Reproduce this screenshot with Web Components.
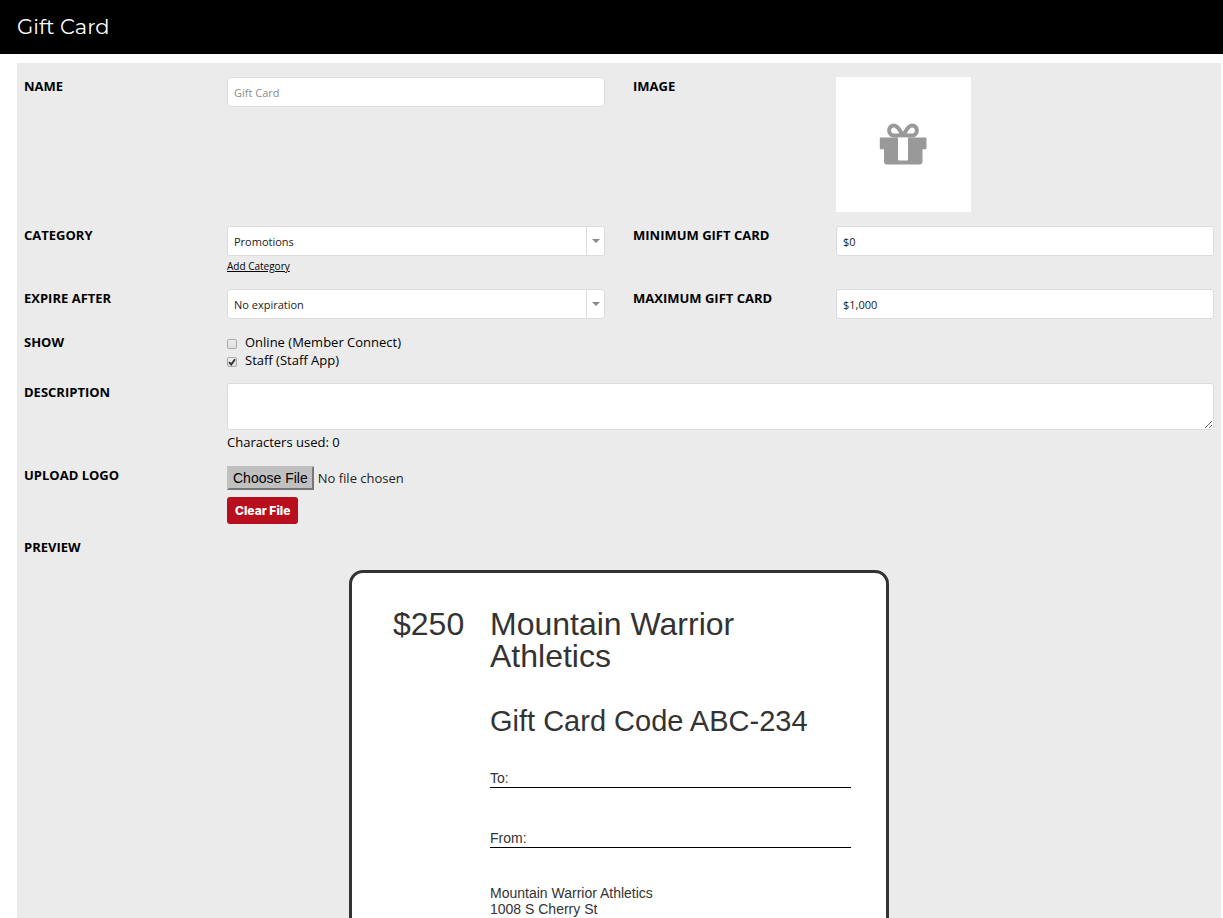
<!DOCTYPE html>
<html lang="en">
<head>
<meta charset="utf-8">
<meta name="viewport" content="width=device-width, initial-scale=1">
<title>Gift Card</title>
<style>
    body {
        margin: 0;
        background: #fff;
        color: #000;
        font-family: "Open Sans", sans-serif;
        font-size: 13px;
        line-height: 18px;
    }
</style>
</head>
<body>

<page-header>Gift Card</page-header>

<main>
    <form-panel>
        <form-row>
            <text-field label="Name" placeholder="Gift Card"></text-field>
            <image-field label="Image"></image-field>
        </form-row>
        <form-row>
            <select-field label="Category" options="Promotions" link="Add Category"></select-field>
            <text-field label="Minimum Gift Card" value="$0"></text-field>
        </form-row>
        <form-row>
            <select-field label="Expire After" options="No expiration"></select-field>
            <text-field label="Maximum Gift Card" value="$1,000"></text-field>
        </form-row>
        <show-field label="Show"></show-field>
        <description-field label="Description"></description-field>
        <logo-field label="Upload Logo"></logo-field>
        <preview-heading label="Preview"></preview-heading>
        <gift-card amount="$250" code="ABC-234">
            <span slot="business">Mountain Warrior Athletics</span>
            <span slot="address">Mountain Warrior Athletics<br>1008 S Cherry St</span>
        </gift-card>
    </form-panel>
</main>

<script>
// shared by every field: label on the left, control on the right
const fieldStyles = `
    :host {
        display: grid;
        grid-template-columns: 203px minmax(0, 1fr);
        align-items: start;
    }
    * {
        box-sizing: border-box;
    }
    .field-label {
        font-weight: bold;
        text-transform: uppercase;
    }
    .control {
        display: block;
        width: 100%;
        height: 30px;
        margin: 0;
        padding: 0 6px;
        border: 1px solid #dcdcdc;
        border-radius: 3px;
        background: #fff;
        color: #222;
        font-family: inherit;
        font-size: 11px;
    }
`;

class PageHeader extends HTMLElement {

    constructor() {
        super();
        this.shadow = this.attachShadow({mode: 'open'});
        this.render();
    }

    render() {
        this.shadow.innerHTML =
        `
        <style>
            :host {
                display: block;
                background: #000;
                color: #fff;
            }
            h1 {
                margin: 0;
                padding: 0 17px;
                font-family: Montserrat, Inter, sans-serif;
                font-size: 21px;
                font-weight: 400;
                line-height: 54px;
            }
        </style>
        <header><h1><slot></slot></h1></header>
        `;
    }
}

class FormPanel extends HTMLElement {

    constructor() {
        super();
        this.shadow = this.attachShadow({mode: 'open'});
        this.render();
    }

    render() {
        this.shadow.innerHTML =
        `
        <style>
            :host {
                display: block;
                margin: 9px 2px 0 17px;
                background: #ebebeb;
            }
            form {
                display: flex;
                flex-direction: column;
                gap: 14px;
                padding: 14px 7px;
            }
        </style>
        <form><slot></slot></form>
        `;
    }
}

class FormRow extends HTMLElement {

    constructor() {
        super();
        this.shadow = this.attachShadow({mode: 'open'});
        this.render();
    }

    render() {
        this.shadow.innerHTML =
        `
        <style>
            :host {
                display: grid;
                grid-template-columns: repeat(2, minmax(0, 1fr));
                column-gap: 28px;
                align-items: start;
            }
        </style>
        <slot></slot>
        `;
    }
}

class TextField extends HTMLElement {

    constructor() {
        super();
        this.shadow = this.attachShadow({mode: 'open'});
        this.render();
    }

    render() {
        const value = this.getAttribute('value') || '';
        const placeholder = this.getAttribute('placeholder') || '';
        this.shadow.innerHTML =
        `
        <style>
            ${fieldStyles}
            .control::placeholder {
                color: #8c8c8c;
                opacity: 1;
            }
        </style>
        <label class="field-label" for="field">${this.getAttribute('label')}</label>
        <input class="control" id="field" type="text" value="${value}" placeholder="${placeholder}">
        `;
    }
}

class SelectField extends HTMLElement {

    constructor() {
        super();
        this.shadow = this.attachShadow({mode: 'open'});
        this.render();
    }

    render() {
        const options = this.getAttribute('options').split('|');
        const link = this.getAttribute('link');
        this.shadow.innerHTML =
        `
        <style>
            ${fieldStyles}
            .select-box {
                position: relative;
            }
            .control {
                appearance: none;
                padding-right: 24px;
            }
            .arrow {
                position: absolute;
                top: 1px;
                right: 1px;
                bottom: 1px;
                width: 18px;
                display: flex;
                align-items: center;
                justify-content: center;
                border-left: 1px solid #dcdcdc;
                pointer-events: none;
            }
            a {
                display: inline-block;
                margin-top: 2px;
                color: #000;
                font-size: 10px;
                line-height: 17px;
                vertical-align: top;
            }
        </style>
        <label class="field-label" for="field">${this.getAttribute('label')}</label>
        <div>
            <div class="select-box">
                <select class="control" id="field">
                    ${options.map(option => `<option>${option}</option>`).join('')}
                </select>
                <span class="arrow">
                    <svg width="8" height="4" viewBox="0 0 8 4" aria-hidden="true"><path d="M0 0h8L4 4z" fill="#888"/></svg>
                </span>
            </div>
            ${link ? `<a href="#">${link}</a>` : ''}
        </div>
        `;
    }
}

class ImageField extends HTMLElement {

    constructor() {
        super();
        this.shadow = this.attachShadow({mode: 'open'});
        this.render();
    }

    render() {
        this.shadow.innerHTML =
        `
        <style>
            ${fieldStyles}
            .image {
                display: flex;
                align-items: center;
                justify-content: center;
                width: 135px;
                height: 135px;
                padding: 0 2px 2px 0;
                background: #fff;
            }
        </style>
        <span class="field-label">${this.getAttribute('label')}</span>
        <div class="image">
            <svg width="48" height="42" viewBox="0 0 48 42" aria-hidden="true">
                <path fill="#999" d="M1.500 14.500H46.500Q47.500 14.500 47.500 15.500V25.500Q47.500 26.200 46.500 26.200H43.500V38.500Q43.500 41.500 40.500 41.500H8Q5 41.500 5 38.500V26.200H1.500Q.8 26.200.8 25.500V15.500Q.8 14.500 1.500 14.500Z"/>
                <path fill="none" stroke="#999" stroke-width="4" stroke-linejoin="round" d="M24 12.400H15C8.500 12.400 8.500 2.500 15 2.500C19.500 2.500 20.500 8 24 12.400C27.500 8 28.500 2.500 33 2.500C39.500 2.500 39.500 12.400 33 12.400Z"/>
                <path fill="#fff" d="M19 14.500H29V36.500Q29 37.500 28 37.500H20Q19 37.500 19 36.500Z"/>
            </svg>
        </div>
        `;
    }
}

class ShowField extends HTMLElement {

    constructor() {
        super();
        this.shadow = this.attachShadow({mode: 'open'});
        this.render();
    }

    render() {
        this.shadow.innerHTML =
        `
        <style>
            ${fieldStyles}
            .option {
                display: flex;
                align-items: center;
                gap: 8px;
            }
            input {
                appearance: none;
                width: 10px;
                height: 10px;
                margin: 3px 0 0;
                border: 1px solid #aaa;
                border-radius: 2px;
                background: linear-gradient(#eee, #ddd);
            }
            input:checked {
                background: url("data:image/svg+xml,%3Csvg xmlns='http://www.w3.org/2000/svg' viewBox='0 0 8 8'%3E%3Cpath d='M1 4.200l2.200 2.300L7 1.200' fill='none' stroke='%23333' stroke-width='1.900'/%3E%3C/svg%3E") center / 8px 8px no-repeat, linear-gradient(#eee, #ddd);
            }
        </style>
        <span class="field-label" id="legend">${this.getAttribute('label')}</span>
        <div role="group" aria-labelledby="legend">
            <label class="option"><input type="checkbox">Online (Member Connect)</label>
            <label class="option"><input type="checkbox" checked>Staff (Staff App)</label>
        </div>
        `;
    }
}

class DescriptionField extends HTMLElement {

    constructor() {
        super();
        this.shadow = this.attachShadow({mode: 'open'});
        this.render();
        const textarea = this.shadow.querySelector('textarea');
        const count = this.shadow.querySelector('.count');
        textarea.addEventListener('input', () => {
            count.textContent = textarea.value.length;
        });
    }

    render() {
        this.shadow.innerHTML =
        `
        <style>
            ${fieldStyles}
            textarea.control {
                height: 47px;
                padding: 6px;
                resize: vertical;
            }
            p {
                margin: 3px 0 1px;
            }
        </style>
        <label class="field-label" for="field">${this.getAttribute('label')}</label>
        <div>
            <textarea class="control" id="field"></textarea>
            <p>Characters used: <span class="count">0</span></p>
        </div>
        `;
    }
}

class LogoField extends HTMLElement {

    constructor() {
        super();
        this.shadow = this.attachShadow({mode: 'open'});
        this.render();
        this.shadow.querySelector('button').addEventListener('click', () => {
            this.shadow.querySelector('input').value = '';
        });
    }

    render() {
        this.shadow.innerHTML =
        `
        <style>
            ${fieldStyles}
            .upload {
                display: flex;
                flex-direction: column;
                align-items: flex-start;
                gap: 7px;
            }
            input {
                height: 24px;
                max-width: 100%;
                color: #222;
                font-family: inherit;
                font-size: 13px;
            }
            input::file-selector-button {
                box-sizing: border-box;
                height: 24px;
                margin: 0 4px 0 0;
                padding: 0 4px;
                border: 2px solid;
                border-color: #c0c0c0 #767676 #767676 #c0c0c0;
                border-radius: 0;
                background: #c0c0c0;
                color: #000;
                font-family: "Liberation Sans", Arial, sans-serif;
                font-size: 14px;
            }
            button {
                height: 27px;
                padding: 0 8px;
                border: none;
                border-radius: 3px;
                background: #b70f1e;
                color: #fff;
                font-family: Inter, sans-serif;
                font-size: 12px;
                font-weight: 800;
                cursor: pointer;
            }
        </style>
        <label class="field-label" for="field">${this.getAttribute('label')}</label>
        <div class="upload">
            <input id="field" type="file">
            <button type="button">Clear File</button>
        </div>
        `;
    }
}

class PreviewHeading extends HTMLElement {

    constructor() {
        super();
        this.shadow = this.attachShadow({mode: 'open'});
        this.render();
    }

    render() {
        this.shadow.innerHTML =
        `
        <style>
            ${fieldStyles}
        </style>
        <span class="field-label">${this.getAttribute('label')}</span>
        `;
    }
}

class GiftCard extends HTMLElement {

    constructor() {
        super();
        this.shadow = this.attachShadow({mode: 'open'});
        this.render();
    }

    render() {
        this.shadow.innerHTML =
        `
        <style>
            :host {
                display: block;
                box-sizing: border-box;
                width: 100%;
                max-width: 540px;
                margin: 0 auto;
                padding: 35px 35px 35px 41px;
                border: 3px solid #333;
                border-radius: 14px;
                background: #fff;
                color: #333;
                font-family: "Liberation Sans", Arial, sans-serif;
                font-size: 14px;
                line-height: 16px;
            }
            .card {
                display: grid;
                grid-template-columns: 97px minmax(0, 1fr);
            }
            .amount, h2 {
                margin: 0;
                font-size: 32px;
                font-weight: 400;
                line-height: 32px;
            }
            h3 {
                margin: 32px 0;
                font-size: 29px;
                font-weight: 400;
                line-height: 34px;
            }
            .line {
                margin: 0 0 42px;
                padding-bottom: 1px;
                border-bottom: 1px solid #000;
            }
            address {
                margin-top: -5px;
                font-style: normal;
            }
        </style>
        <div class="card">
            <div class="amount">${this.getAttribute('amount')}</div>
            <div>
                <h2><slot name="business"></slot></h2>
                <h3>Gift Card Code ${this.getAttribute('code')}</h3>
                <div class="line">To:</div>
                <div class="line">From:</div>
                <address><slot name="address"></slot></address>
            </div>
        </div>
        `;
    }
}

customElements.define('page-header', PageHeader);
customElements.define('form-panel', FormPanel);
customElements.define('form-row', FormRow);
customElements.define('text-field', TextField);
customElements.define('select-field', SelectField);
customElements.define('image-field', ImageField);
customElements.define('show-field', ShowField);
customElements.define('description-field', DescriptionField);
customElements.define('logo-field', LogoField);
customElements.define('preview-heading', PreviewHeading);
customElements.define('gift-card', GiftCard);
</script>
</body>
</html>
